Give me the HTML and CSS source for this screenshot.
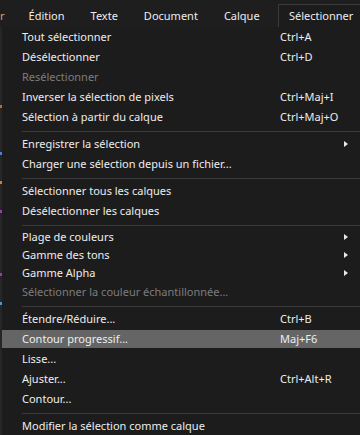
FILE: index.html
```html
<!DOCTYPE html>
<html lang="fr">
<head>
    <meta charset="UTF-8">
    <meta name="viewport" content="width=device-width, initial-scale=1.0">
    <title>Menu Sélectionner</title>
    <link rel="stylesheet" href="styles.css">
</head>
<body>
    <div class="menubar">
        <span class="top-item cut">r</span>
        <span class="top-item">Édition</span>
        <span class="top-item">Texte</span>
        <span class="top-item">Document</span>
        <span class="top-item">Calque</span>
        <span class="top-item open">Sélectionner</span>
    </div>
    <div class="workspace">
        <div class="strip">
            <i class="mark m1"></i><i class="mark m2"></i><i class="mark m3"></i>
            <i class="mark m4"></i><i class="mark m5"></i><i class="mark m6"></i>
        </div>
        <div class="menu">
            <div class="item"><span>Tout sélectionner</span><span class="key">Ctrl+A</span></div>
            <div class="item"><span>Désélectionner</span><span class="key">Ctrl+D</span></div>
            <div class="item disabled"><span>Resélectionner</span><span class="key"></span></div>
            <div class="item"><span>Inverser la sélection de pixels</span><span class="key">Ctrl+Maj+I</span></div>
            <div class="item"><span>Sélection à partir du calque</span><span class="key">Ctrl+Maj+O</span></div>
            <div class="sep"></div>
            <div class="item sub"><span>Enregistrer la sélection</span><span class="arrow"></span></div>
            <div class="item"><span>Charger une sélection depuis un fichier...</span></div>
            <div class="sep"></div>
            <div class="item"><span>Sélectionner tous les calques</span></div>
            <div class="item"><span>Désélectionner les calques</span></div>
            <div class="sep"></div>
            <div class="item sub short"><span>Plage de couleurs</span><span class="arrow"></span></div>
            <div class="item sub short"><span>Gamme des tons</span><span class="arrow"></span></div>
            <div class="item sub short"><span>Gamme Alpha</span><span class="arrow"></span></div>
            <div class="item disabled"><span>Sélectionner la couleur échantillonnée...</span></div>
            <div class="sep"></div>
            <div class="item"><span>Étendre/Réduire...</span><span class="key">Ctrl+B</span></div>
            <div class="item active"><span>Contour progressif...</span><span class="key">Maj+F6</span></div>
            <div class="item"><span>Lisse...</span></div>
            <div class="item"><span>Ajuster...</span><span class="key">Ctrl+Alt+R</span></div>
            <div class="item"><span>Contour...</span></div>
            <div class="sep"></div>
            <div class="item"><span>Modifier la sélection comme calque</span></div>
        </div>
    </div>
</body>
</html>
```

FILE: styles.css
```css
body {
    margin: 0;
    width: 360px;
    height: 435px;
    overflow: hidden;
    background: #1e1e1e;
    font-family: "Noto Sans", "Open Sans", sans-serif;
    font-size: 11px;
    color: #ededed;
}

.menubar {
    height: 27px;
    display: flex;
    align-items: flex-end;
    background: #1e1e1e;
}

.top-item {
    height: 22px;
    line-height: 22px;
    padding: 0 13px;
    box-sizing: border-box;
    white-space: nowrap;
}

.top-item.cut {
    padding: 0 11px 0 0;
    color: #d9a25a;
}

.top-item.open {
    margin-left: auto;
    padding: 0 0 0 10px;
    width: 82px;
    height: 23px;
    background: #1d1c1d;
    border: 1px solid #3b3b3b;
    border-right: none;
    border-bottom: none;
}

.workspace {
    display: flex;
}

.strip {
    width: 2px;
    height: 408px;
    background: #262626;
    display: flex;
    flex-direction: column;
}

.mark {
    display: block;
    width: 2px;
    height: 3px;
    margin-top: 26px;
}

.m1 { background: #c06a2a; margin-top: 78px; }
.m2 { background: #4a7fd8; margin-top: 44px; }
.m3 { background: #e07a22; }
.m4 { background: #a03ab0; }
.m5 { background: #a03ab0; margin-top: 60px; }
.m6 { background: #3a9ed8; }

.menu {
    flex: 1;
    height: 408px;
    background: #1d1c1d;
}

.item {
    height: 20px;
    display: flex;
    align-items: center;
    padding-left: 20px;
    line-height: 20px;
    white-space: nowrap;
}

.item.short {
    height: 18px;
}

.item .key {
    margin-left: auto;
    width: 80px;
}

.item.disabled {
    color: #7c7c7c;
}

.item.active {
    background: #656565;
    margin: 1px 0;
    height: 18px;
}

.arrow {
    margin-left: auto;
    margin-right: 12px;
    width: 0;
    height: 0;
    border-top: 3.5px solid transparent;
    border-bottom: 3.5px solid transparent;
    border-left: 4px solid #e8e8e8;
}

.sep {
    height: 1px;
    background: #3a3a3a;
    margin: 4px 0 2px 20px;
}
```
